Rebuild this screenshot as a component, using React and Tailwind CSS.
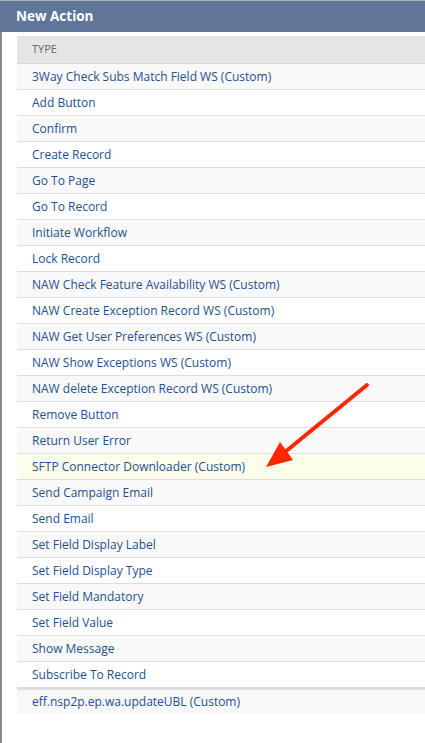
const ACTIONS = [
  '3Way Check Subs Match Field WS (Custom)',
  'Add Button',
  'Confirm',
  'Create Record',
  'Go To Page',
  'Go To Record',
  'Initiate Workflow',
  'Lock Record',
  'NAW Check Feature Availability WS (Custom)',
  'NAW Create Exception Record WS (Custom)',
  'NAW Get User Preferences WS (Custom)',
  'NAW Show Exceptions WS (Custom)',
  'NAW delete Exception Record WS (Custom)',
  'Remove Button',
  'Return User Error',
  'SFTP Connector Downloader (Custom)',
  'Send Campaign Email',
  'Send Email',
  'Set Field Display Label',
  'Set Field Display Type',
  'Set Field Mandatory',
  'Set Field Value',
  'Show Message',
  'Subscribe To Record',
];

const HIGHLIGHT = 'SFTP Connector Downloader (Custom)';

export default function App() {
  return (
    <div
      className="relative w-[425px] h-[743px] bg-white overflow-hidden"
      style={{ fontFamily: '"Open Sans", "Liberation Sans", sans-serif' }}
    >
      {/* Popup header */}
      <div className="h-[32px] border-t border-[#b4b4b4] bg-[#5f7698] flex items-center pl-4 pb-[1px]">
        <span className="text-white text-[13.5px] font-bold">New Action</span>
      </div>

      <div className="flex h-[711px]">
        <div className="w-[2px] bg-[#8c8c8c]" />
        <div className="flex-1 pl-[15px] pt-[4px]">
          {/* Table header */}
          <div className="h-[28px] bg-[#e5e5e5] border-b border-[#d6d6d6] flex items-center pl-[15px] text-[11px] text-[#666]">
            TYPE
          </div>

          {ACTIONS.map((name, i) => (
            <div
              key={name}
              className={`h-[26px] border-b border-[#dedede] flex items-center pl-[15px] text-[12px] text-[#24508f] ${
                name === HIGHLIGHT
                  ? 'bg-[#fdfdeb]'
                  : i % 2 === 0
                  ? 'bg-[#f9f9f9]'
                  : 'bg-white'
              }`}
            >
              {name}
            </div>
          ))}

          <div className="h-[26px] border-t-2 border-[#dcdcdc] bg-[#f8f8f8] flex items-center pl-[15px] text-[12px] text-[#24508f]">
            eff.nsp2p.ep.wa.updateUBL (Custom)
          </div>
        </div>
      </div>

      {/* Annotation arrow */}
      <svg className="absolute left-0 top-0 pointer-events-none" width="425" height="743">
        <line x1="367" y1="385" x2="285" y2="452" stroke="#ff2600" strokeWidth="4" strokeLinecap="round" />
        <polygon points="266,467 280,442 293,460" fill="#ff2600" />
      </svg>
    </div>
  );
}
